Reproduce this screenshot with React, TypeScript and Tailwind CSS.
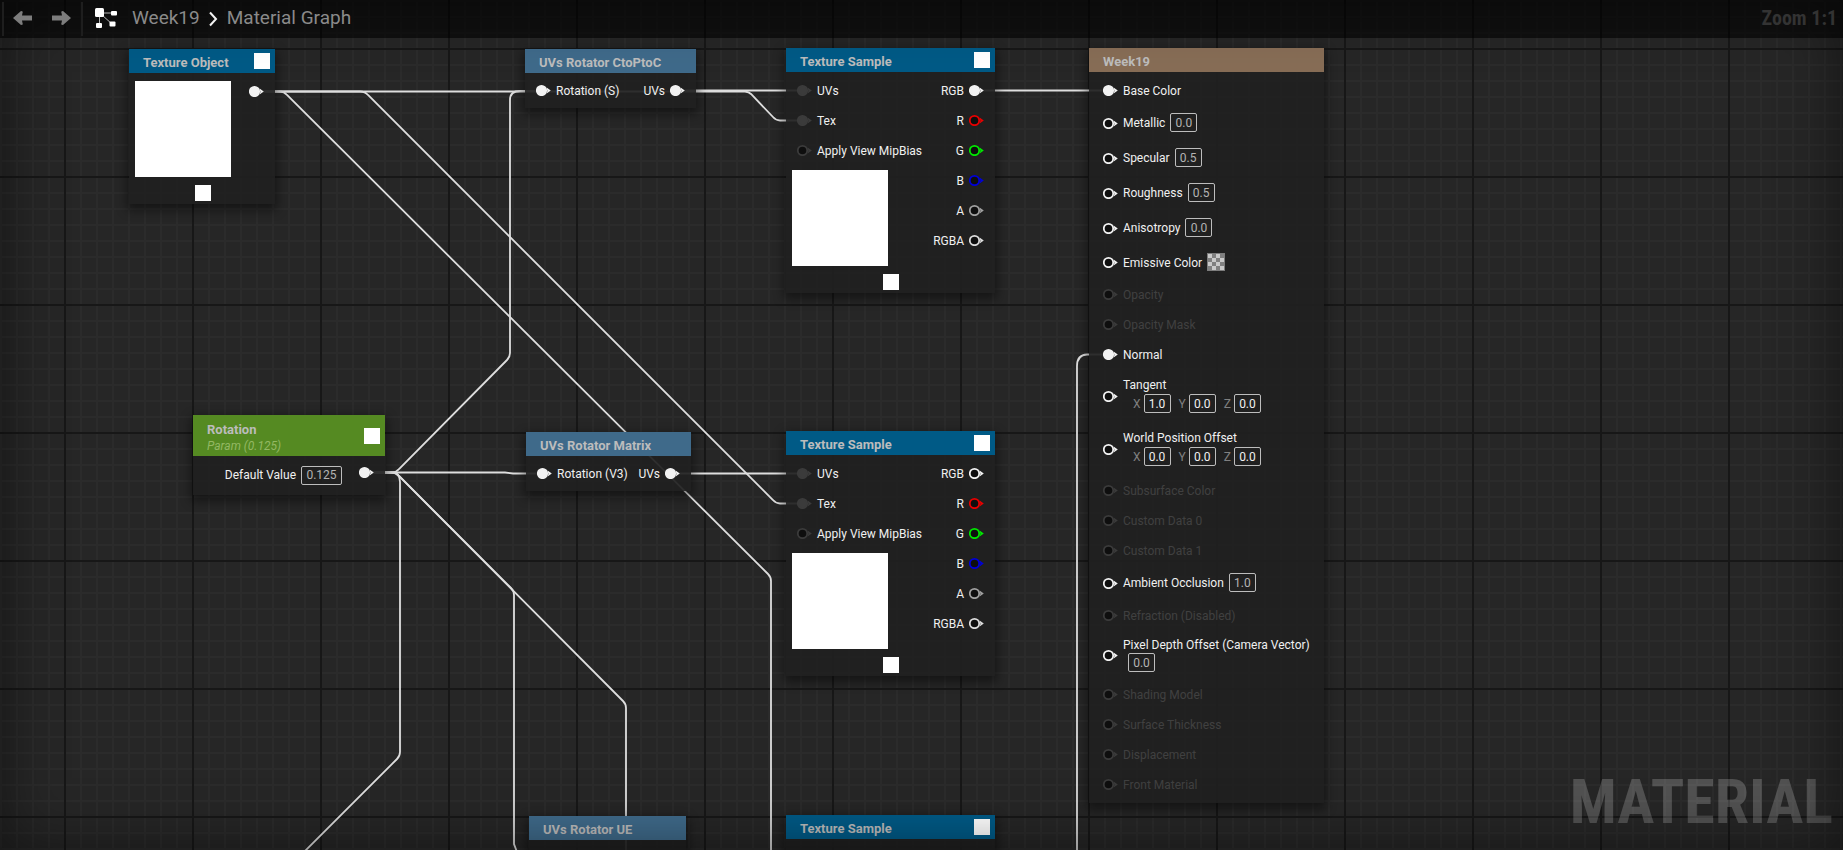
import { useId } from "react";
import type { ReactNode } from "react";

type PinProps = { color?: string; filled?: boolean; dim?: boolean };

function Pin({ color = "#f2f2f2", filled = false, dim = false }: PinProps) {
  const tint = dim ? "#3b3b3b" : color;
  return (
    <svg width="15" height="12" viewBox="0 0 15 12" className="shrink-0" aria-hidden="true">
      <circle cx="5.5" cy="6.5" r="4.7" fill={filled ? tint : "#0e0e0e"} stroke={tint} strokeWidth="1.8" />
      <path d="M10.6 3.4Q12 6.500 10.600 9.600L14.8 6.500Z" fill={tint} />
    </svg>
  );
}

function ValueBox({ id, value, label, wide = false, bright = false }: { id?: string; value: string; label?: string; wide?: boolean; bright?: boolean }) {
  return (
    <input
      id={id}
      aria-label={label}
      defaultValue={value}
      className={`h-[19px] rounded-xs border border-[#bdbdbd] bg-transparent p-0 text-center text-xs outline-none ${wide ? "w-[41px]" : "w-[27px]"} ${bright ? "text-[#f0f0f0]" : "text-[#b4b4b4]"}`}
    />
  );
}

function Square({ label }: { label: string }) {
  return <button type="button" aria-label={label} className="block size-4 shrink-0 bg-white" />;
}

function Node({ place, header, title, subtitle, toggle = false, children }: { place: string; header: string; title: string; subtitle?: string; toggle?: boolean; children?: ReactNode }) {
  return (
    <section className={`absolute bg-[#202020]/93 shadow-[0_4px_10px_2px_rgba(0,0,0,0.45)] ${place}`}>
      <header className={`flex items-center justify-between pr-[5px] pl-3.5 ${subtitle ? "h-[41px]" : "h-6"} ${header}`}>
        <div className="pt-1">
          <h2 className="text-[13px] leading-4 font-bold text-[#bcbcbc]">{title}</h2>
          {subtitle && <p className="text-xs leading-4 text-[#93b863] italic">{subtitle}</p>}
        </div>
        {toggle && <Square label={`Toggle ${title}`} />}
      </header>
      {children}
    </section>
  );
}

function InputRow({ label, ...pin }: PinProps & { label: string }) {
  return (
    <div className="flex h-[30px] items-center gap-[5px]">
      <Pin {...pin} />
      <span className="pt-0.5">{label}</span>
    </div>
  );
}

function OutputRow({ label = "", ...pin }: PinProps & { label?: string }) {
  return (
    <div className="flex h-[30px] items-center justify-end gap-[5px]">
      <span className="pt-0.5">{label}</span>
      <Pin {...pin} />
    </div>
  );
}

function FunctionNode({ place, title, input }: { place: string; title: string; input: string }) {
  return (
    <Node place={place} title={title} header="bg-[#3f6a8a]">
      <div className="flex justify-between px-[11px] pt-0.5 pb-[3px]">
        <InputRow label={input} filled />
        <OutputRow label="UVs" filled />
      </div>
    </Node>
  );
}

function TextureSample({ place, rgbLinked = false }: { place: string; rgbLinked?: boolean }) {
  return (
    <Node place={place} title="Texture Sample" header="bg-[#005a86]" toggle>
      <div className="flex justify-between pt-[3px] pr-[11px] pl-1.5">
        <div>
          <div className="pl-[5px]">
            <InputRow label="UVs" filled dim />
            <InputRow label="Tex" filled dim />
            <InputRow label="Apply View MipBias" dim />
          </div>
          <div className="mt-[5px] size-24 bg-white" />
        </div>
        <div>
          <OutputRow label="RGB" filled={rgbLinked} />
          <OutputRow label="R" color="#e80000" />
          <OutputRow label="G" color="#00e800" />
          <OutputRow label="B" color="#0000d8" />
          <OutputRow label="A" color="#a0a0a0" />
          <OutputRow label="RGBA" color="#dcdcdc" />
        </div>
      </div>
      <div className="flex justify-center pt-2 pb-[3px]">
        <Square label="Expand preview" />
      </div>
    </Node>
  );
}

type MaterialInput = {
  name: string;
  kind?: "scalar" | "vector" | "color" | "stacked";
  values?: string[];
  linked?: boolean;
  off?: boolean;
};

const materialInputs: MaterialInput[] = [
  { name: "Base Color", linked: true },
  { name: "Metallic", kind: "scalar", values: ["0.0"] },
  { name: "Specular", kind: "scalar", values: ["0.5"] },
  { name: "Roughness", kind: "scalar", values: ["0.5"] },
  { name: "Anisotropy", kind: "scalar", values: ["0.0"] },
  { name: "Emissive Color", kind: "color" },
  { name: "Opacity", off: true },
  { name: "Opacity Mask", off: true },
  { name: "Normal", linked: true },
  { name: "Tangent", kind: "vector", values: ["1.0", "0.0", "0.0"] },
  { name: "World Position Offset", kind: "vector", values: ["0.0", "0.0", "0.0"] },
  { name: "Subsurface Color", off: true },
  { name: "Custom Data 0", off: true },
  { name: "Custom Data 1", off: true },
  { name: "Ambient Occlusion", kind: "scalar", values: ["1.0"] },
  { name: "Refraction (Disabled)", off: true },
  { name: "Pixel Depth Offset (Camera Vector)", kind: "stacked", values: ["0.0"] },
  { name: "Shading Model", off: true },
  { name: "Surface Thickness", off: true },
  { name: "Displacement", off: true },
  { name: "Front Material", off: true },
];

const rowHeights = { plain: "h-[30px]", scalar: "h-[35px]", color: "h-[34px]", vector: "h-[53px]", stacked: "h-[49px]" };

function MaterialRow({ name, kind, values = [], linked, off }: MaterialInput) {
  const id = useId();
  return (
    <li className={`flex items-center gap-[5px] ${rowHeights[kind ?? "plain"]} ${off ? "text-[#404040]" : ""}`}>
      <Pin filled={linked} dim={off} />
      {!kind && <span className="pt-0.5">{name}</span>}
      {kind === "scalar" && (
        <div className="flex items-center gap-[5px]">
          <label htmlFor={id}>{name}</label>
          <ValueBox id={id} value={values[0]} />
        </div>
      )}
      {kind === "color" && (
        <>
          <span className="pt-0.5">{name}</span>
          <svg width="18" height="18" viewBox="0 0 18 18" role="img" aria-label="Color swatch">
            <rect width="18" height="18" fill="#7c7c7c" />
            {[0, 1, 2, 3].map((r) =>
              [0, 1, 2, 3].map((c) => (
                <rect key={`${r}${c}`} x={1 + c * 4} y={1 + r * 4} width="4" height="4" fill={(r + c) % 2 ? "#808080" : "#c9c9c9"} />
              )),
            )}
          </svg>
        </>
      )}
      {kind === "vector" && (
        <fieldset className="pb-px">
          <legend className="pb-px leading-4">{name}</legend>
          <div className="flex gap-2 pl-2.5">
            {["X", "Y", "Z"].map((axis, i) => (
              <label key={axis} className="flex items-center gap-[3px] text-[#808080]">
                {axis}
                <ValueBox value={values[i]} bright />
              </label>
            ))}
          </div>
        </fieldset>
      )}
      {kind === "stacked" && (
        <div className="flex flex-col items-start">
          <label htmlFor={id} className="leading-4">{name}</label>
          <div className="flex pl-[5px]">
            <ValueBox id={id} value={values[0]} />
          </div>
        </div>
      )}
    </li>
  );
}

const wires = [
  "M263 91.5H745Q749 92 751 94L773 117Q776 120.5 780 120.5H797",
  "M263 91.5H360Q365 91.5 368 95L773 500Q776 503.5 780 503.5H797",
  "M263 91.5H280Q284 91.5 287 95L768 574Q771 577 771 581V850",
  "M684 90.5H797",
  "M982 90.5H1103",
  "M372 472.5H392Q396 472.5 399 469L507 360Q510 357 510 353V100Q510 91 520 91H536",
  "M372 472.5H505L513 473.5H537",
  "M372 472.5H392Q400 472.5 400 482V752Q400 756 397 759L305 851",
  "M372 472.5H392Q396 472.5 399 476L511 588Q514 591 514 595V844L517 852",
  "M372 472.5H392Q396 472.5 399 476L623 701Q626 704 626 708V852",
  "M679 473.5H797",
  "M1103 354.5H1087Q1077 355 1077 366V852",
];

export default function App() {
  const defaultId = useId();
  return (
    <main className="relative min-h-screen overflow-hidden bg-[#262626] bg-[linear-gradient(to_right,#171717_2px,transparent_2px),linear-gradient(to_bottom,#171717_2px,transparent_2px),linear-gradient(to_right,#2b2b2b_2px,transparent_2px),linear-gradient(to_bottom,#2b2b2b_2px,transparent_2px)] bg-[size:128px_128px,128px_128px,16px_16px,16px_16px] bg-[position:64px_48px,64px_48px,0_0,0_0] font-['Roboto','Liberation_Sans',sans-serif] text-xs text-[#f0f0f0]">
      <svg className="absolute inset-0 size-full" fill="none" stroke="#dedede" strokeWidth="1.8" aria-hidden="true">
        {wires.map((d) => (
          <path key={d} d={d} />
        ))}
      </svg>

      <Node place="left-[129px] top-[49px] w-[146px]" title="Texture Object" header="bg-[#005a86]" toggle>
        <div className="flex justify-between pr-[11px] pl-1.5">
          <div className="mt-2 size-24 bg-white" />
          <div className="pt-[3px]">
            <OutputRow filled />
          </div>
        </div>
        <div className="flex justify-center pt-2 pb-[3px] pl-0.5">
          <Square label="Expand preview" />
        </div>
      </Node>

      <FunctionNode place="left-[525px] top-[49px] w-[171px]" title="UVs Rotator CtoPtoC" input="Rotation (S)" />
      <FunctionNode place="left-[526px] top-[432px] w-[165px]" title="UVs Rotator Matrix" input="Rotation (V3)" />
      <Node place="left-[529px] top-[816px] w-[157px]" title="UVs Rotator UE" header="bg-[#3f6a8a]">
        <div className="h-9" />
      </Node>

      <TextureSample place="left-[786px] top-[48px] w-[209px]" rgbLinked />
      <TextureSample place="left-[786px] top-[431px] w-[209px]" />
      <Node place="left-[786px] top-[815px] w-[209px]" title="Texture Sample" header="bg-[#005a86]" toggle>
        <div className="h-9" />
      </Node>

      <Node place="left-[193px] top-[415px] w-[192px]" title="Rotation" subtitle="Param (0.125)" header="bg-[#558a22]" toggle>
        <div className="flex items-start justify-end gap-3 pt-px pr-[11px] pb-0.5">
          <div className="flex h-9 items-center gap-[5px]">
            <label htmlFor={defaultId}>Default Value</label>
            <ValueBox id={defaultId} value="0.125" wide />
          </div>
          <OutputRow filled />
        </div>
      </Node>

      <Node place="left-[1089px] top-[48px] w-[235px]" title="Week19" header="bg-[#876d56]">
        <ul className="pt-[3px] pr-2 pb-1 pl-3.5">
          {materialInputs.map((row) => (
            <MaterialRow key={row.name} {...row} />
          ))}
        </ul>
      </Node>

      <p className="pointer-events-none absolute right-2.5 bottom-[17px] font-['Roboto_Condensed','Roboto',sans-serif] text-[62px] leading-none font-bold text-white/20">MATERIAL</p>

      <div className="pointer-events-none absolute inset-0 shadow-[inset_0_0_60px_rgba(0,0,0,0.5)]" />

      <nav aria-label="Graph" className="absolute inset-x-0 top-0 flex h-[38px] items-start justify-between bg-black/60 pr-1.5 pl-0.5 text-[19px] text-[#8a8a8a]">
        <div className="flex h-9 items-center">
          <span className="mt-0.5 h-[34px] w-0.5 bg-[#1e1e1e]" />
          <button type="button" aria-label="Back" className="ml-[9px]">
            <svg width="19" height="14" viewBox="0 0 19 14" fill="#7d7d7d"><path d="M0 7L8 0C10 0 10 1 9.500 2L9 4.500H19V9.500H9L9.500 12C10 13 10 14 8 14Z" /></svg>
          </button>
          <button type="button" aria-label="Forward" className="ml-5">
            <svg width="19" height="14" viewBox="0 0 19 14" fill="#7d7d7d"><path d="M19 7L11 0C9 0 9 1 9.500 2L10 4.500H0V9.500H10L9.500 12C9 13 9 14 11 14Z" /></svg>
          </button>
          <span className="mt-0.5 ml-2.5 h-[34px] w-0.5 bg-[#1e1e1e]" />
          <svg width="22" height="20" viewBox="0 0 22 20" className="ml-3" aria-hidden="true">
            <path d="M4.500 5V17M5 5H18M7 7L17 16" stroke="#b5b5b5" strokeWidth="1" fill="none" />
            <g fill="#fff">
              <rect x="0" y="0" width="9" height="9" rx="1.500" />
              <rect x="16" y="3" width="6" height="4.500" rx="1" />
              <rect x="1" y="15" width="6" height="5" rx="1" />
              <rect x="14.500" y="13.500" width="6" height="5" rx="1" />
            </g>
          </svg>
          <a href="#week19" className="ml-[15px]">Week19</a>
          <svg width="9" height="16" viewBox="0 0 9 16" fill="none" stroke="#f2f2f2" strokeWidth="2" className="mx-[9px] mt-0.5" aria-hidden="true"><path d="M1 1.500L7 8L1 14.500" /></svg>
          <a href="#graph">Material Graph</a>
        </div>
        <span className="font-['Roboto_Condensed','Roboto',sans-serif] text-[20px] leading-9 font-bold text-[#333333]">Zoom 1:1</span>
      </nav>
    </main>
  );
}
